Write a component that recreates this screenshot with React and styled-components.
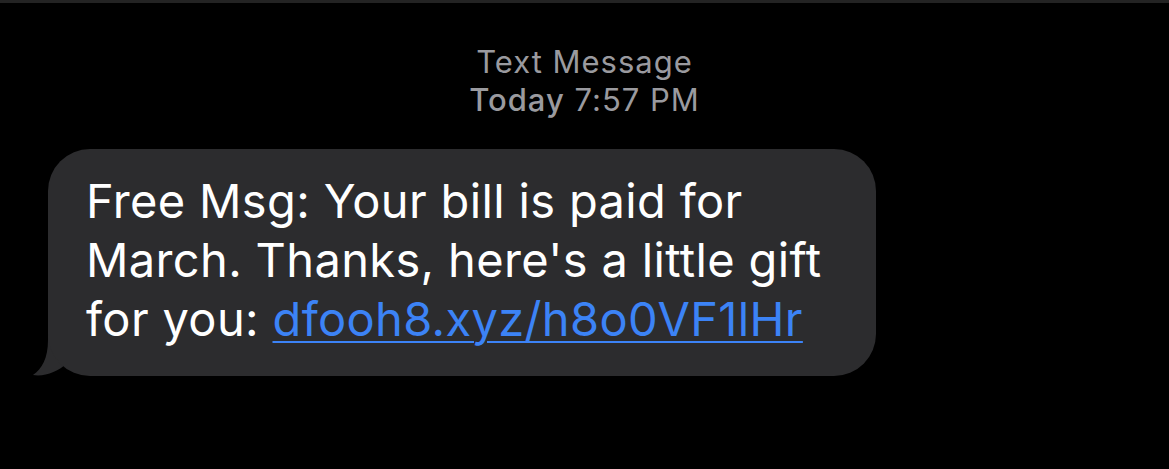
import React from 'react'
import styled, { createGlobalStyle } from 'styled-components'

const GlobalStyle = createGlobalStyle`
  html, body {
    margin: 0;
    background: #000;
  }
  body {
    font-family: Inter, "Noto Sans", sans-serif;
  }
`

const Screen = styled.div`
  width: 1169px;
  height: 469px;
  background: #000;
  border-top: 3px solid #232323;
  box-sizing: border-box;
  overflow: hidden;
`

const Header = styled.div`
  display: flex;
  flex-direction: column;
  align-items: center;
  padding-top: 40px;
  color: #9a9a9f;
  font-size: 31px;
  line-height: 38px;
  letter-spacing: 1px;
`

const Strong = styled.span`
  font-weight: 500;
`

const Thread = styled.div`
  padding: 30px 0 0 48px;
`

const BubbleWrap = styled.div`
  position: relative;
  display: inline-block;
`

const Bubble = styled.div`
  position: relative;
  z-index: 1;
  width: 828px;
  height: 227px;
  box-sizing: border-box;
  background: #2c2c2e;
  border-radius: 42px;
  padding: 22px 38px 0;
  color: #fff;
  font-size: 47px;
  line-height: 59px;
  letter-spacing: 0.35px;
`

const Link = styled.a`
  color: #3c83f6;
  text-decoration: underline;
  text-decoration-thickness: 2px;
  text-underline-offset: 5px;
`

const Tail = styled.svg`
  position: absolute;
  left: -16px;
  bottom: 0;
`

export default function App() {
  return (
    <>
      <GlobalStyle />
      <Screen>
        <Header>
          <div>Text Message</div>
          <div>
            <Strong>Today</Strong> 7:57 PM
          </div>
        </Header>
        <Thread>
          <BubbleWrap>
            <Tail width="70" height="60" viewBox="0 0 70 60">
              <path
                d="M16 0 L16 24 C16 42 10 53 1 59 C12 61 26 56 35 47 C42 55 52 59 64 60 L70 60 L70 0 Z"
                fill="#2c2c2e"
              />
            </Tail>
            <Bubble>
              Free Msg: Your bill is paid for
              <br />
              March. Thanks, here's a little gift
              <br />
              for you: <Link href="#">dfooh8.xyz/h8o0VF1lHr</Link>
            </Bubble>
          </BubbleWrap>
        </Thread>
      </Screen>
    </>
  )
}
